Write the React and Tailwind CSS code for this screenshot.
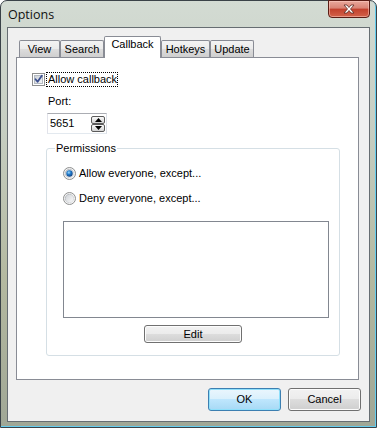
import React from "react";

const tabs = [
  { label: "View", w: "w-[41px]" },
  { label: "Search", w: "w-[44px]" },
  { label: "Callback", w: "w-[57px]", active: true },
  { label: "Hotkeys", w: "w-[49px]" },
  { label: "Update", w: "w-[44px]" },
];

function Checkbox() {
  return (
    <svg width="13" height="13" viewBox="0 0 13 13" className="shrink-0">
      <defs>
        <linearGradient id="cbfill" x1="0" y1="0" x2="1" y2="1">
          <stop offset="0" stopColor="#c9ced6" />
          <stop offset="1" stopColor="#f6f7f8" />
        </linearGradient>
      </defs>
      <rect x="0.5" y="0.5" width="12" height="12" fill="#fff" stroke="#8e8f8f" />
      <rect x="2.5" y="2.5" width="8" height="8" fill="url(#cbfill)" stroke="#b4bac2" />
      <path d="M3.5 6.2 L5.6 8.8 L9.8 2.8" fill="none" stroke="#3b4f8f" strokeWidth="1.8" strokeLinecap="round" strokeLinejoin="round" />
    </svg>
  );
}

function Radio({ checked }) {
  return (
    <svg width="13" height="13" viewBox="0 0 13 13" className="shrink-0">
      <defs>
        <linearGradient id="rdring" x1="0" y1="0" x2="1" y2="1">
          <stop offset="0" stopColor="#a5a9ae" />
          <stop offset="1" stopColor="#e3e5e8" />
        </linearGradient>
        <linearGradient id="rdin" x1="0" y1="0" x2="1" y2="1">
          <stop offset="0" stopColor="#cdd1d6" />
          <stop offset="1" stopColor="#fbfbfb" />
        </linearGradient>
        <radialGradient id="rddot" cx="0.4" cy="0.35" r="0.7">
          <stop offset="0" stopColor="#9fdcff" />
          <stop offset="0.45" stopColor="#1f78c8" />
          <stop offset="1" stopColor="#133f7d" />
        </radialGradient>
      </defs>
      <circle cx="6.5" cy="6.5" r="6" fill="#f4f4f4" stroke="#8e8f8f" />
      <circle cx="6.5" cy="6.5" r="4.2" fill="url(#rdin)" stroke="url(#rdring)" strokeWidth="0.8" />
      {checked && <circle cx="6.5" cy="6.5" r="3.2" fill="url(#rddot)" />}
    </svg>
  );
}

function SpinBtn({ up }) {
  return (
    <div className="w-[14px] h-[8px] rounded-[2px] border border-[#5b5b5b] bg-[linear-gradient(#fafafa,#e6e6e6_50%,#d2d2d2)] flex items-center justify-center">
      <svg width="7" height="4" viewBox="0 0 7 4">
        {up ? <path d="M0 4 L3.5 0 L7 4 Z" fill="#000" /> : <path d="M0 0 L3.5 4 L7 0 Z" fill="#000" />}
      </svg>
    </div>
  );
}

function Button({ children, primary, className }) {
  return (
    <div
      className={
        primary
          ? "flex items-center justify-center rounded-[3px] border border-[#3c7fb1] bg-[linear-gradient(#eaf6fd,#d9f0fc_50%,#bee6fd_50%,#a7d9f5)] shadow-[inset_0_0_0_1px_#8fe0fb] text-[11px] leading-[13px] text-black " + className
          : "flex items-center justify-center rounded-[3px] border border-[#707070] bg-[linear-gradient(#f2f2f2,#ebebeb_50%,#dddddd_50%,#cfcfcf)] shadow-[inset_0_0_0_1px_#fcfcfc] text-[11px] leading-[13px] text-black " + className
      }
    >
      {children}
    </div>
  );
}

export default function App() {
  return (
    <div className="w-[377px] h-[428px] font-['Liberation_Sans',Arial,sans-serif] text-black">
      <div className="w-[377px] h-[428px] flex flex-col rounded-t-[7px] border border-[#3a4248] bg-[linear-gradient(180deg,#d3dbd3,#c6cec2_30%,#b4b9a0_65%,#a0a796)] shadow-[inset_-1px_-1px_0_#64cdee]">
        {/* Title bar */}
        <div className="h-[26px] shrink-0 flex justify-between items-start pr-[6px]">
          <span className="pl-[7px] pt-[6px] text-[12.5px] leading-[15px] font-['Open_Sans','Liberation_Sans',sans-serif] text-[#111]">
            Options
          </span>
          <div className="-mt-[1px] w-[42px] h-[18px] rounded-b-[4px] border border-[#5a1c14] bg-[linear-gradient(#e9a89c,#d98374_45%,#c2402c_50%,#d3624a)] shadow-[inset_0_0_0_1px_rgba(255,210,200,0.5)] flex items-center justify-center">
            <svg width="12" height="10" viewBox="0 0 12 10">
              <path
                d="M1 1 L4 1 L6 3.5 L8 1 L11 1 L7.5 5 L11 9 L8 9 L6 6.5 L4 9 L1 9 L4.5 5 Z"
                fill="#fff"
                stroke="#5a2a22"
                strokeWidth="0.8"
                strokeLinejoin="round"
              />
            </svg>
          </div>
        </div>

        {/* Client area */}
        <div className="mx-[6px] w-[363px] h-[395px] border border-[#666d72] bg-[#f0f0f0] flex flex-col">
          {/* Tabs */}
          <div className="mt-[8px] ml-[11px] h-[21px] flex items-end">
            {tabs.map((t) =>
              t.active ? (
                <div
                  key={t.label}
                  className={t.w + " relative z-10 h-[22px] -mb-[1px] border border-b-0 border-[#898c95] rounded-t-[2px] bg-white flex justify-center pt-[1px] text-[11px] leading-[13px] whitespace-nowrap"}
                >
                  {t.label}
                </div>
              ) : (
                <div
                  key={t.label}
                  className={t.w + " h-[17px] border border-b-0 border-[#898c95] rounded-t-[2px] bg-[linear-gradient(#f3f3f3,#ebebeb_50%,#dddddd_50%,#cfcfcf)] flex justify-center pt-[2px] text-[11px] leading-[13px] whitespace-nowrap"}
                >
                  {t.label}
                </div>
              )
            )}
          </div>

          {/* Panel */}
          <div className="ml-[8px] w-[343px] h-[323px] border border-[#898c95] bg-white pl-[15px] pt-[14px] text-[11px] leading-[13px]">
            <div className="flex items-center h-[15px]">
              <Checkbox />
              <span className="ml-[1px] h-[15px] w-[72px] border border-dotted border-black px-[1px] leading-[13px] whitespace-nowrap">
                Allow callback
              </span>
            </div>

            <div className="ml-[16px] mt-[8px] h-[13px]">Port:</div>

            <div className="ml-[15px] mt-[5px] w-[60px] h-[21px] border border-[#abadb3] border-b-[#e3e9ef] border-l-[#e2e3ea] border-r-[#dbdfe6] bg-white flex items-center justify-between pl-[2px] pr-[1px]">
              <span>5651</span>
              <div className="flex flex-col">
                <SpinBtn up />
                <SpinBtn />
              </div>
            </div>

            <fieldset className="ml-[14px] mt-[8px] w-[294px] h-[214px] border border-[#d5dfe5] rounded-[3px] p-0">
              <legend className="ml-[8px] px-[1px] leading-[13px]">Permissions</legend>
              <div className="pl-[16px]">
                <div className="mt-[11px] h-[15px] flex items-center gap-[3px]">
                  <Radio checked />
                  <span>Allow everyone, except...</span>
                </div>
                <div className="mt-[10px] h-[15px] flex items-center gap-[3px]">
                  <Radio />
                  <span>Deny everyone, except...</span>
                </div>
                <div className="mt-[15px] w-[266px] h-[97px] border border-[#828790] bg-white" />
              </div>
              <div className="mt-[7px] flex justify-center">
                <Button className="w-[98px] h-[18px]">Edit</Button>
              </div>
            </fieldset>
          </div>

          {/* Dialog buttons */}
          <div className="mt-[8px] flex justify-end gap-[7px] pr-[8px]">
            <Button primary className="w-[73px] h-[23px]">OK</Button>
            <Button className="w-[73px] h-[23px]">Cancel</Button>
          </div>
        </div>
      </div>
    </div>
  );
}
